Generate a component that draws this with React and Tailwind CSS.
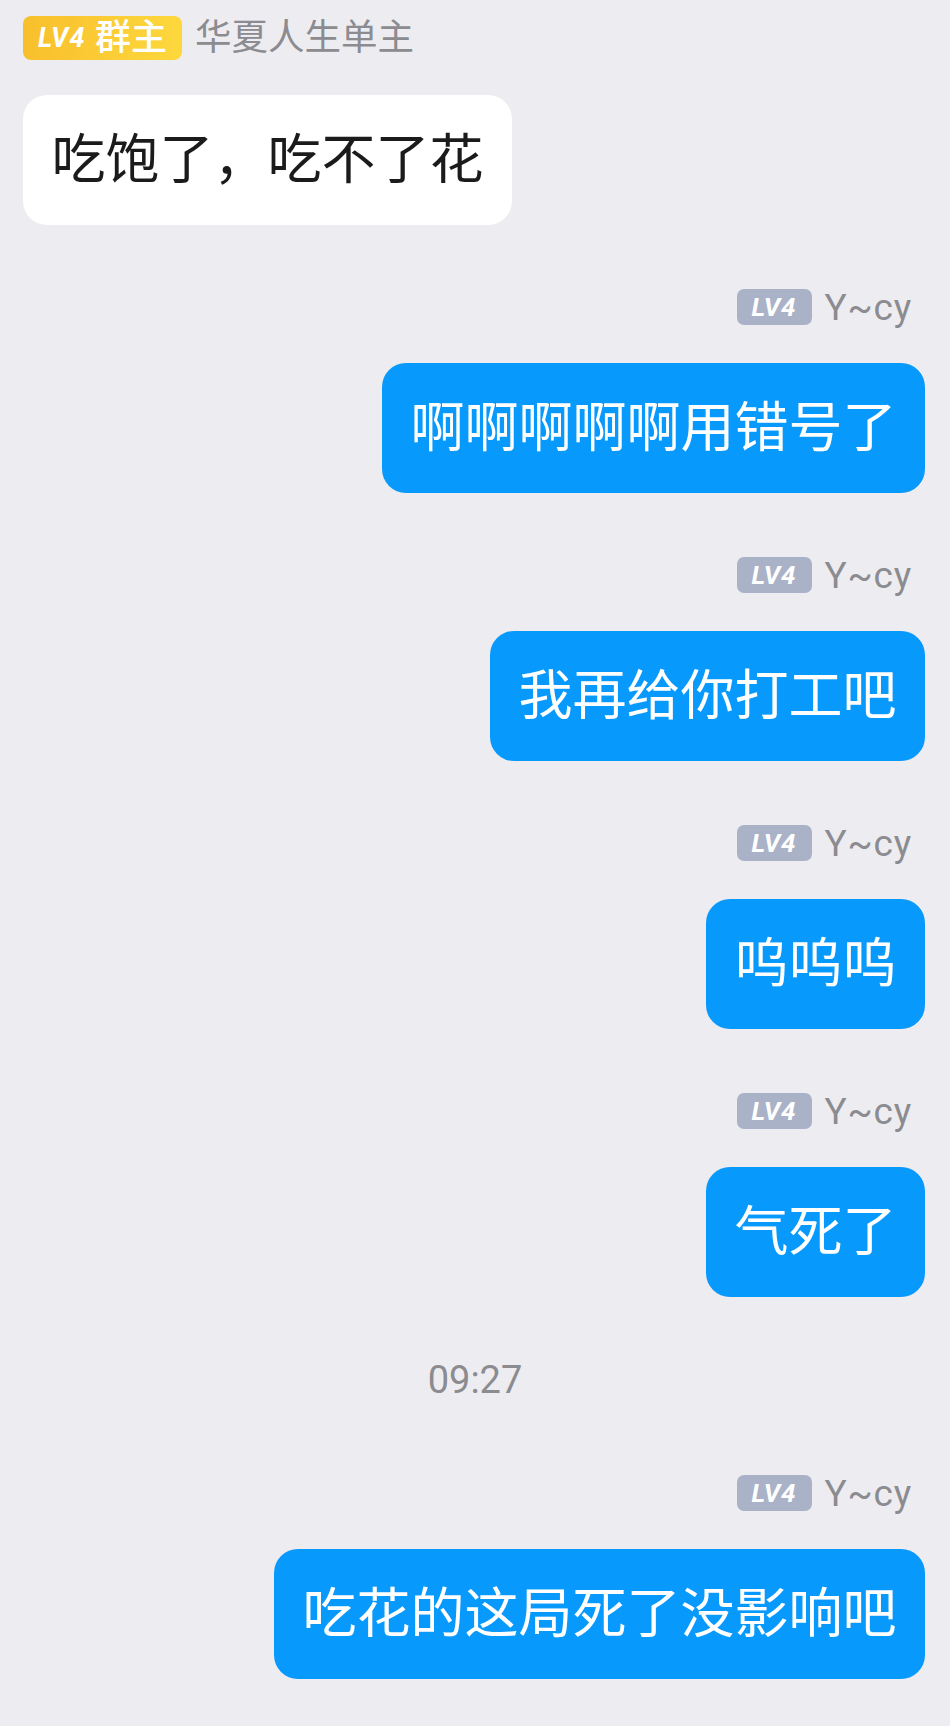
const messages = [
  { side: 'left', name: '华夏人生单主', owner: true, text: '吃饱了，吃不了花' },
  { side: 'right', name: 'Y~cy', text: '啊啊啊啊啊用错号了' },
  { side: 'right', name: 'Y~cy', text: '我再给你打工吧' },
  { side: 'right', name: 'Y~cy', text: '呜呜呜' },
  { side: 'right', name: 'Y~cy', text: '气死了' },
  { time: '09:27' },
  { side: 'right', name: 'Y~cy', text: '吃花的这局死了没影响吧' },
];

function OwnerBadge() {
  return (
    <span className="flex items-center justify-center w-[159px] h-[44px] gap-[9px] rounded-[8px] bg-gradient-to-r from-[#f8bf2c] to-[#fdd83d] text-white">
      <span className="text-[27px] font-bold italic tracking-[1.5px] font-['Roboto',sans-serif]">LV4</span>
      <span className="text-[36px] font-medium leading-none">群主</span>
    </span>
  );
}

function LevelBadge() {
  return (
    <span className="flex items-center justify-center w-[75px] h-[36px] rounded-[7px] bg-[#a9b2c6] text-white text-[26px] font-bold italic tracking-[1px] font-['Roboto',sans-serif]">
      LV4
    </span>
  );
}

function Message({ msg, first }) {
  const right = msg.side === 'right';
  return (
    <div className={`flex flex-col ${right ? 'items-end' : 'items-start'} ${first ? '' : 'mt-[60px]'}`}>
      <div className={`flex items-center h-[44px] ${right ? 'pr-[13px]' : ''}`}>
        {msg.owner ? <OwnerBadge /> : <LevelBadge />}
        <span
          className={`text-[#8b8b90] leading-none ml-[13px] ${
            right ? 'text-[37px] tracking-[0.8px]' : 'text-[36.5px]'
          }`}
        >
          {msg.name}
        </span>
      </div>
      <div
        className={`${first ? 'mt-[35px]' : 'mt-[34px]'} h-[130px] flex items-center px-[28.5px] rounded-[24px] text-[54px] ${
          right ? 'bg-[#0899fd] text-white' : 'bg-white text-[#1b1b1b]'
        }`}
      >
        {msg.text}
      </div>
    </div>
  );
}

export default function App() {
  return (
    <div className="min-h-[1726px] bg-[#ededf1] pt-[16px] pl-[23px] pr-[25px] font-['Roboto','Noto_Sans_CJK_SC',sans-serif]">
      {messages.map((msg, i) =>
        msg.time ? (
          <div
            key={i}
            className="mt-[61px] mb-[69px] h-[44px] flex items-center justify-center -ml-[23px] -mr-[25px] text-[38px] text-[#8b8b90]"
          >
            {msg.time}
          </div>
        ) : (
          <Message key={i} msg={msg} first={i === 0} />
        )
      )}
    </div>
  );
}
